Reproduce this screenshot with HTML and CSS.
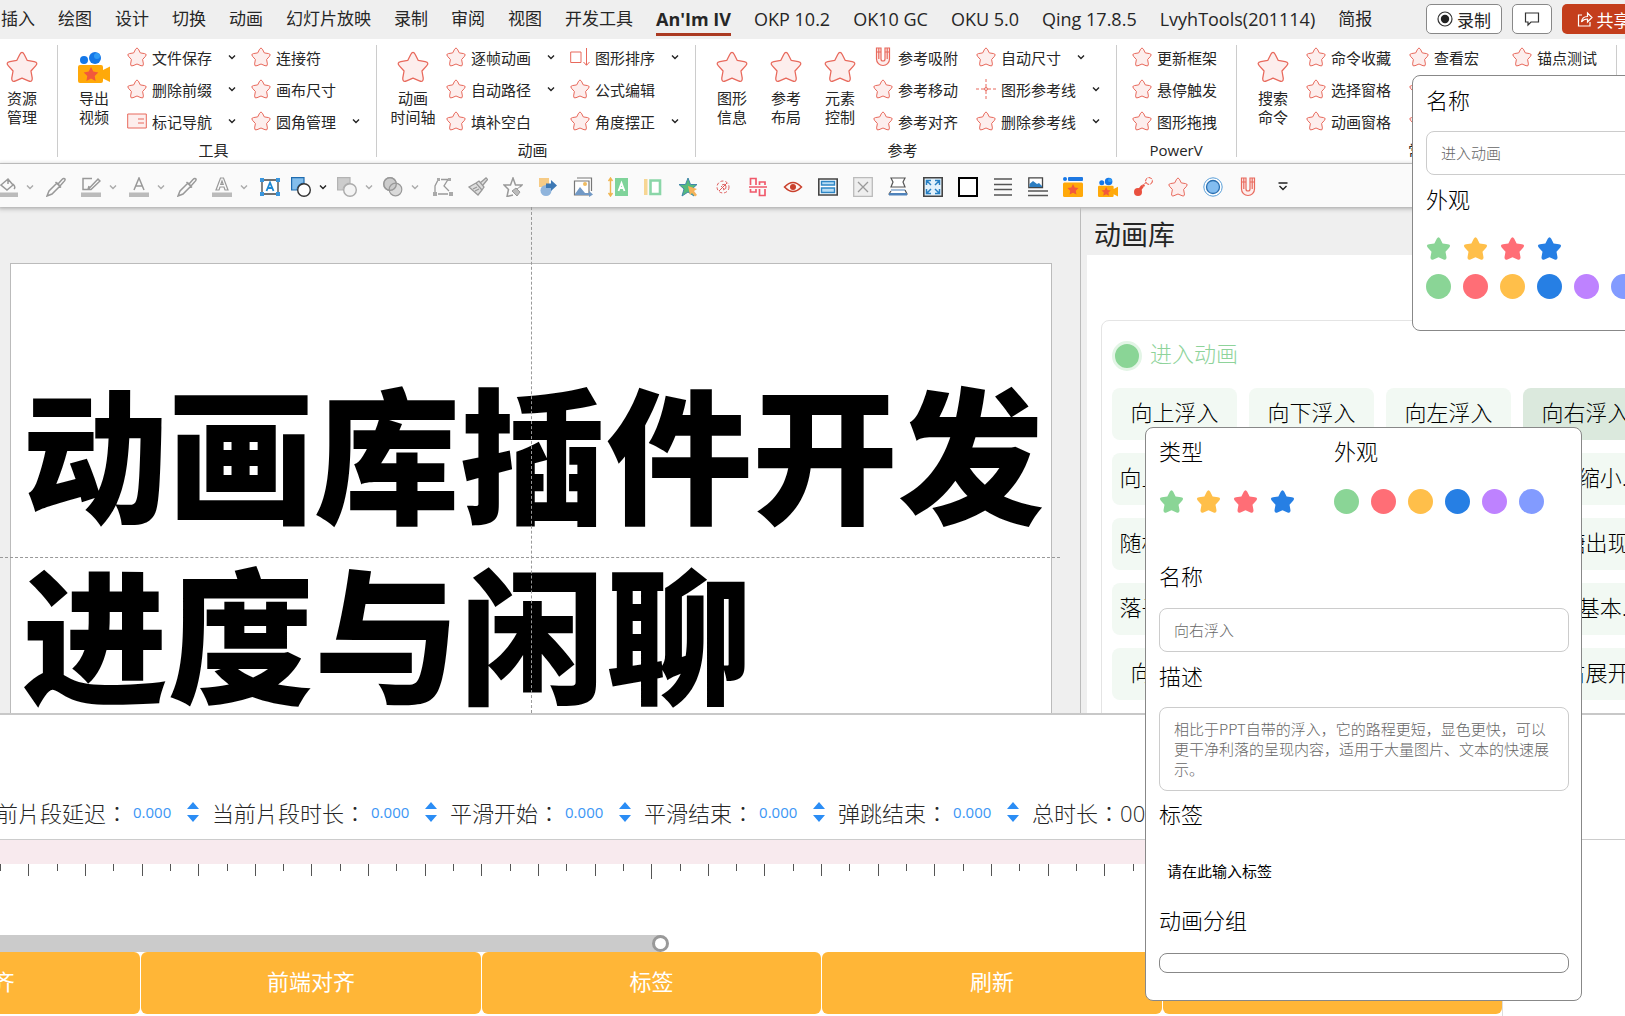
FILE: index.html
```html
<!DOCTYPE html>
<html lang="zh-CN">
<head>
<meta charset="utf-8">
<title>动画库</title>
<link rel="stylesheet" href="styles.css">
</head>
<body>
<svg class="defs" aria-hidden="true">
  <symbol id="star" viewBox="0 0 20 20"><path stroke-linejoin="round" d="M8.6 2.2Q10 -.4 11.400 2.200L13.300 5.900L17.600 6.600Q20.400 7.200 18.500 9.300L15.600 12.500L16.400 16.900Q16.600 19.800 14 18.700L10 17L6 18.700Q3.400 19.800 3.600 16.900L4.400 12.500L1.500 9.300Q-.4 7.200 2.400 6.600L6.700 5.900Z"/></symbol>
  <symbol id="caret" viewBox="0 0 8 8"><path d="M1 2.5L4 5.5L7 2.5" fill="none" stroke="currentColor" stroke-width="1.4"/></symbol>
  <symbol id="camera" viewBox="0 0 32 32"><circle cx="6" cy="9" r="4" fill="#1477e8"/><circle cx="17" cy="7" r="6" fill="#1477e8"/><circle cx="19" cy="5" r="3" fill="#2f9bf5"/><path d="M2 14H23Q25 14 25 16V19L32 15.500V31L25 27.500V30Q25 32 23 32H2Q0 32 0 30V16Q0 14 2 14Z" fill="#ffa90a"/><path d="M13 16l2.300 4.600 5 .8-3.600 3.500.9 5.100-4.600-2.400-4.600 2.400.9-5.100-3.600-3.500 5-.8z" fill="#f2593b"/></symbol>
  <symbol id="magnet" viewBox="0 0 20 20"><path d="M3.500 1H8V12a2 2 0 0 0 4 0V1H16.500V12a6.500 6.500 0 0 1-13 0ZM3.500 5H8M12 5H16.500M5.800 1V12M14.200 1V12" stroke-width="1.2"/></symbol>
  <symbol id="dropper" viewBox="0 0 20 20"><path d="M1 19L3 14L11 6L14 9L6 17ZM9.500 5L15 10.500M12 7L16 2.500Q18 .8 19 2Q19.500 3.500 17.500 5L14 9Z" fill="none" stroke="#999" stroke-width="1.5"/></symbol>
  <symbol id="up" viewBox="0 0 12 20"><path d="M0 7L6 0L12 7ZM0 13L6 20L12 13Z" fill="#2b8df5"/></symbol>
</svg>

<header class="tabs">
  <nav>
    <a href="#">插入</a><a href="#">绘图</a><a href="#">设计</a><a href="#">切换</a><a href="#">动画</a><a href="#">幻灯片放映</a><a href="#">录制</a><a href="#">审阅</a><a href="#">视图</a><a href="#">开发工具</a><a href="#" class="active">An'Im IV</a><a href="#">OKP 10.2</a><a href="#">OK10 GC</a><a href="#">OKU 5.0</a><a href="#">Qing 17.8.5</a><a href="#">LvyhTools(201114)</a><a href="#">简报</a>
  </nav>
  <div class="tab-actions">
    <button class="outlined"><svg width="16" height="16" viewBox="0 0 16 16"><circle cx="8" cy="8" r="7" fill="none" stroke="#333" stroke-width="1.2"/><circle cx="8" cy="8" r="4.200" fill="#222"/></svg>录制</button>
    <button class="outlined comment" aria-label="批注"><svg width="16" height="16" viewBox="0 0 16 16"><path d="M1.500 2H14.500V11H7L4 14V11H1.500Z" fill="none" stroke="#333" stroke-width="1.200"/></svg></button>
    <button class="share"><svg width="16" height="16" viewBox="0 0 16 16"><path d="M5 4H1.500V15H13V11M4.500 11Q5 5.500 10.500 5.500V2L15 6.500L10.500 11V8Q6.500 8 4.500 11Z" fill="none" stroke="#fff" stroke-width="1.200"/></svg>共享</button>
  </div>
</header>

<section class="ribbon">
  <div class="group first"><div class="tools"><button class="big"><svg class="red"><use href="#star"/></svg>资源<br>管理</button></div></div>
  <div class="group">
    <div class="tools">
      <button class="big"><svg><use href="#camera"/></svg>导出<br>视频</button>
      <div class="col">
        <button class="item"><svg class="red"><use href="#star"/></svg>文件保存<svg class="caret"><use href="#caret"/></svg></button>
        <button class="item"><svg class="red"><use href="#star"/></svg>删除前缀<svg class="caret"><use href="#caret"/></svg></button>
        <button class="item"><svg class="red" viewBox="0 0 20 20"><path d="M.7 3H19.300V17H.7ZM11 8H17M11 12H17"/></svg>标记导航<svg class="caret"><use href="#caret"/></svg></button>
      </div>
      <div class="col">
        <button class="item"><svg class="red"><use href="#star"/></svg>连接符</button>
        <button class="item"><svg class="red"><use href="#star"/></svg>画布尺寸</button>
        <button class="item"><svg class="red"><use href="#star"/></svg>圆角管理<svg class="caret"><use href="#caret"/></svg></button>
      </div>
    </div>
    <div class="name">工具</div>
  </div>
  <div class="group">
    <div class="tools">
      <button class="big"><svg class="red"><use href="#star"/></svg>动画<br>时间轴</button>
      <div class="col">
        <button class="item"><svg class="red"><use href="#star"/></svg>逐帧动画<svg class="caret"><use href="#caret"/></svg></button>
        <button class="item"><svg class="red"><use href="#star"/></svg>自动路径<svg class="caret"><use href="#caret"/></svg></button>
        <button class="item"><svg class="red"><use href="#star"/></svg>填补空白</button>
      </div>
      <div class="col">
        <button class="item"><svg class="red" viewBox="0 0 20 20"><path d="M.7 5H11V15.500H.7ZM16.500 1V18M13.500 15L16.500 18.300L19.500 15" fill="none"/></svg>图形排序<svg class="caret"><use href="#caret"/></svg></button>
        <button class="item"><svg class="red"><use href="#star"/></svg>公式编辑</button>
        <button class="item"><svg class="red"><use href="#star"/></svg>角度摆正<svg class="caret"><use href="#caret"/></svg></button>
      </div>
    </div>
    <div class="name">动画</div>
  </div>
  <div class="group">
    <div class="tools">
      <button class="big"><svg class="red"><use href="#star"/></svg>图形<br>信息</button>
      <button class="big"><svg class="red"><use href="#star"/></svg>参考<br>布局</button>
      <button class="big"><svg class="red"><use href="#star"/></svg>元素<br>控制</button>
      <div class="col">
        <button class="item"><svg class="red"><use href="#magnet"/></svg>参考吸附</button>
        <button class="item"><svg class="red"><use href="#star"/></svg>参考移动</button>
        <button class="item"><svg class="red"><use href="#star"/></svg>参考对齐</button>
      </div>
      <div class="col">
        <button class="item"><svg class="red"><use href="#star"/></svg>自动尺寸<svg class="caret"><use href="#caret"/></svg></button>
        <button class="item"><svg class="red" viewBox="0 0 20 20"><path d="M0 10H3M5 10H8M12 10H15M17 10H20M10 0V3M10 5V8M10 12V15M10 17V20"/><circle cx="10" cy="10" r="1.500"/></svg>图形参考线<svg class="caret"><use href="#caret"/></svg></button>
        <button class="item"><svg class="red"><use href="#star"/></svg>删除参考线<svg class="caret"><use href="#caret"/></svg></button>
      </div>
    </div>
    <div class="name">参考</div>
  </div>
  <div class="group slim">
    <div class="tools">
      <div class="col">
        <button class="item"><svg class="red"><use href="#star"/></svg>更新框架</button>
        <button class="item"><svg class="red"><use href="#star"/></svg>悬停触发</button>
        <button class="item"><svg class="red"><use href="#star"/></svg>图形拖拽</button>
      </div>
    </div>
    <div class="name">PowerV</div>
  </div>
  <div class="group">
    <div class="tools">
      <button class="big"><svg class="red"><use href="#star"/></svg>搜索<br>命令</button>
      <div class="col">
        <button class="item"><svg class="red"><use href="#star"/></svg>命令收藏</button>
        <button class="item"><svg class="red"><use href="#star"/></svg>选择窗格</button>
        <button class="item"><svg class="red"><use href="#star"/></svg>动画窗格</button>
      </div>
      <div class="col">
        <button class="item"><svg class="red"><use href="#star"/></svg>查看宏</button>
        <button class="item" aria-label="录制宏"><svg class="red"><use href="#star"/></svg></button>
        <button class="item" aria-label="运行宏"><svg class="red"><use href="#star"/></svg></button>
      </div>
      <div class="col">
        <button class="item"><svg class="red"><use href="#star"/></svg>锚点测试</button>
      </div>
    </div>
    <div class="name">常用</div>
  </div>
</section>

<section class="quick">
  <button class="split" aria-label="填充"><svg viewBox="0 0 20 20"><path d="M3 8L10 2L15 8L9 13ZM10 2V7M15 7Q18 10 16 12" fill="none" stroke="#999" stroke-width="1.500"/><path d="M0 15.500H20V20H0Z" fill="#bbb"/></svg><svg class="caret dim"><use href="#caret"/></svg></button>
  <button aria-label="取色器"><svg><use href="#dropper"/></svg></button>
  <button class="split" aria-label="轮廓"><svg viewBox="0 0 20 20"><path d="M11 1.500H2V12.500H7L17 2L19 4L10 12.500H7L8 9" fill="none" stroke="#999" stroke-width="1.500"/><path d="M0 15.500H20V20H0Z" fill="#bbb"/></svg><svg class="caret dim"><use href="#caret"/></svg></button>
  <button class="split" aria-label="字体颜色"><svg viewBox="0 0 20 20"><path d="M5 13L10 1L15 13M6.500 9H13.500" fill="none" stroke="#999" stroke-width="1.500"/><path d="M0 15.500H20V20H0Z" fill="#bbb"/></svg><svg class="caret dim"><use href="#caret"/></svg></button>
  <button aria-label="文字取色"><svg><use href="#dropper"/></svg></button>
  <button class="split" aria-label="文字轮廓"><svg viewBox="0 0 20 20"><path d="M4 13L8.500 1H11.500L16 13H13L12 10H8L7 13ZM8.800 7.500L10 4L11.200 7.500Z" fill="none" stroke="#999" stroke-width="1.200"/><path d="M0 15.500H20V20H0Z" fill="#bbb"/></svg><svg class="caret dim"><use href="#caret"/></svg></button>
  <div class="shapes">
    <button aria-label="文本框"><svg viewBox="0 0 20 20"><path d="M2 3H18V17H2Z" fill="#fff" stroke="#444" stroke-width="1.300"/><path d="M0 1H4V5H0ZM16 1H20V5H16ZM0 15H4V19H0ZM16 15H20V19H16Z" fill="#3a96dd"/><path d="M6.500 14L10 5.500L13.500 14M8 11H12" fill="none" stroke="#1f88d2" stroke-width="1.800"/></svg></button>
    <button class="split" aria-label="形状"><svg viewBox="0 0 20 20"><path d="M.6.6H13V6A7 7 0 0 0 6 13H.6Z" fill="#83beec" stroke="#1f6cb0" stroke-width="1.200"/><circle cx="13" cy="13" r="6.300" fill="#fff" stroke="#333" stroke-width="1.400"/></svg><svg class="caret"><use href="#caret"/></svg></button>
    <button class="split" aria-label="合并形状"><svg viewBox="0 0 20 20"><path d="M.6.6H13V6A7 7 0 0 0 6 13H.6Z" fill="#ccc" stroke="#b3b3b3" stroke-width="1.200"/><circle cx="13" cy="13" r="6.300" fill="#f3f3f3" stroke="#aaa" stroke-width="1.400"/></svg><svg class="caret dim"><use href="#caret"/></svg></button>
    <button class="split" aria-label="相交"><svg viewBox="0 0 20 20"><circle cx="7" cy="7" r="6.300" fill="#ccc" stroke="#999" stroke-width="1.200"/><circle cx="12.500" cy="12.500" r="6.300" fill="#ccc" fill-opacity=".7" stroke="#999" stroke-width="1.200"/><circle cx="7" cy="7" r="6.300" fill="none" stroke="#999" stroke-width="1.200"/></svg><svg class="caret dim"><use href="#caret"/></svg></button>
  </div>
  <button aria-label="编辑顶点"><svg viewBox="0 0 20 20"><path d="M2 15V9L5 3M8 2.500H15L11 9L16 14M5 17H15" fill="none" stroke="#999" stroke-width="1.300"/><path d="M4 1H7V4H4ZM15 1H18V4H15ZM0 15H4V19H0ZM16 15H20V19H16Z" fill="#aaa"/></svg></button>
  <button aria-label="格式刷"><svg viewBox="0 0 20 20"><path d="M1 10L8 6L14 13L10 18ZM8 6L11 4L16 10L14 13M12 6L18 1L19.500 2.500L15 8M5 12L9 10M7 14L11 12" fill="#ddd" stroke="#999" stroke-width="1.300"/></svg></button>
  <button aria-label="动画刷"><svg viewBox="0 0 20 20"><path d="M10 18L4 19.500L5.500 12.500L1 8H7.500L10 1L12.500 8H19L17 10" fill="none" stroke="#999" stroke-width="1.500"/><path d="M9 14L13 11L17 15L14 19ZM14 12L18 9" fill="#bbb" stroke="#999"/></svg></button>
  <button aria-label="替换形状"><svg viewBox="0 0 20 20"><path d="M1 1H11V10H1Z" fill="#f6cb86"/><circle cx="8" cy="13.500" r="5.500" fill="#8fb4dc"/><path d="M8 6.500H13V3L19 8.500L13 14V11H8Z" fill="#3d78b4"/></svg></button>
  <button aria-label="更改图片"><svg viewBox="0 0 20 20"><path d="M4 1H18.500V14M1.500 4H16V18H1.500Z" fill="#fff" stroke="#777" stroke-width="1.200"/><circle cx="12" cy="7" r="2" fill="#f0bb60"/><path d="M2 17L7 10L12 16H16V14L20 17.500L16 20V18H2Z" fill="#7299c5"/></svg></button>
  <button aria-label="等高文本"><svg viewBox="0 0 20 20"><path d="M2.500 2V18M.5 4L2.500 1L4.500 4M.5 16L2.500 19L4.500 16" fill="none" stroke="#f0b550" stroke-width="1.400"/><path d="M7 1H20V19H7Z" fill="#7fd39a"/><path d="M10.500 14L13.500 6L16.500 14M12 11H15" fill="none" stroke="#fff" stroke-width="1.800"/></svg></button>
  <button aria-label="等宽"><svg viewBox="0 0 20 20"><path d="M1 2H4.500V18H1Z" fill="#f7d694"/><path d="M7.500 3.500H17V17H7.500Z" fill="#fff" stroke="#8ad6a8" stroke-width="2.600"/></svg></button>
  <button aria-label="选择动画"><svg viewBox="0 0 20 20"><path d="M10 1L12.500 7.500H19L14 12L16 19L10 15L4 19L6 12L1 7.500H7.500Z" fill="#55ba7c" stroke="#3f87a8"/><path d="M10 9L19 12L16 14L19 18L17 19.500L14 16L12 18Z" fill="#f5b25a"/></svg></button>
  <button aria-label="路径"><svg viewBox="0 0 20 20"><circle cx="10" cy="10" r="6" fill="none" stroke="#df5b5b" stroke-dasharray="3 2"/><path d="M6 14L14 6M8 9L11 12M9 8Q12 6 13 9T10 13" fill="none" stroke="#df5b5b"/></svg></button>
  <button aria-label="对齐"><svg viewBox="0 0 20 20"><path d="M2.500 8V1.500H8V8M11.500 8V5H17V8M2.500 12V15H8V12M11.500 12V18.500H17V12M1 10H19" fill="none" stroke="#f0596b" stroke-width="1.700"/></svg></button>
  <button aria-label="显示"><svg viewBox="0 0 20 20"><path d="M1.500 10Q10 1 18.500 10Q10 19 1.500 10Z" fill="#fff4f1" stroke="#c9402c" stroke-width="1.500"/><circle cx="10" cy="10" r="3" fill="#c9402c"/></svg></button>
  <button aria-label="窗格"><svg viewBox="0 0 20 20"><path d="M.8 2H19.200V18H.8Z" fill="#fff" stroke="#444" stroke-width="1.600"/><path d="M3.500 4.500H16.500V8H3.500ZM3.500 11H16.500V15.500H3.500Z" fill="#b6dcf5" stroke="#2e86c5" stroke-width="1.400"/></svg></button>
  <button aria-label="关闭"><svg viewBox="0 0 20 20"><path d="M.7.7H19.300V19.300H.7Z" fill="#eee" stroke="#bbb" stroke-width="1.300"/><path d="M5 5L15 15M15 5L5 15" stroke="#999" stroke-width="1.300"/></svg></button>
  <button aria-label="压平"><svg viewBox="0 0 20 20"><path d="M3 1H17L15 5L17 10H3L5 5ZM3 14L1 17H19L17 13" fill="#fff" stroke="#555" stroke-width="1.200"/><path d="M1 16H19V18.500H1ZM3 12.500H17V13.500H3Z" fill="#4e82bb"/></svg></button>
  <button aria-label="适应窗口"><svg viewBox="0 0 20 20"><path d="M.8.800H19.200V19.200H.8Z" fill="#e2f1fb" stroke="#444" stroke-width="1.600"/><path d="M3.500 8V3.500H8M12 3.500H16.500V8M16.500 12V16.500H12M8 16.500H3.500V12M4 4L8 8M16 4L12 8M4 16L8 12M16 16L12 12" fill="none" stroke="#277fc2" stroke-width="1.500"/></svg></button>
  <button aria-label="方框"><svg viewBox="0 0 20 20"><path d="M1 1H19V19H1Z" fill="#fff" stroke="#000" stroke-width="2"/></svg></button>
  <button aria-label="行距"><svg viewBox="0 0 20 20"><path d="M1 2H19M1 7.500H19M1 12.500H19M1 18H19" stroke="#555" stroke-width="1.300"/></svg></button>
  <button aria-label="图文"><svg viewBox="0 0 20 20"><path d="M.8.800H14.500V10.500H.8Z" fill="#fff" stroke="#444" stroke-width="1.300"/><path d="M1.500 7L5 4L9 7L11 6L14 9V10H1.500Z" fill="#2d7ec1"/><path d="M0 14H20M0 18.500H20" stroke="#555" stroke-width="1.300"/></svg></button>
  <button aria-label="动画库"><svg viewBox="0 0 20 20"><circle cx="2" cy="2" r="2" fill="#1477e8"/><rect x="5" width="15" height="4" rx="1" fill="#1e78e2"/><rect y="5.500" width="20" height="14.500" rx="1.500" fill="#ffa90a"/><path d="M10 7l1.700 3.500 3.800.600-2.700 2.700.6 3.800-3.400-1.800-3.400 1.800.6-3.800-2.700-2.700 3.800-.6z" fill="#f2593b"/></svg></button>
  <button aria-label="导出视频"><svg><use href="#camera"/></svg></button>
  <button aria-label="连接"><svg viewBox="0 0 20 20"><circle cx="5" cy="15" r="4" fill="#e9503f"/><path d="M5 15L9.500 9" stroke="#e9503f" stroke-width="3"/><circle cx="10.500" cy="8.500" r="1.300" fill="#e9503f"/><circle cx="16" cy="4" r="3.400" fill="none" stroke="#e9503f" stroke-dasharray="4 1"/><path d="M11.500 7L13.500 5" stroke="#e9503f"/></svg></button>
  <button aria-label="收藏"><svg class="red"><use href="#star"/></svg></button>
  <button aria-label="圆"><svg viewBox="0 0 20 20"><circle cx="10" cy="10" r="9.200" fill="#fff" stroke="#5a9fd8"/><circle cx="10" cy="10" r="6.500" fill="#83bdf0" stroke="#2a6fb0" stroke-width="1.300"/></svg></button>
  <button aria-label="吸附"><svg class="red"><use href="#magnet"/></svg></button>
  <button aria-label="更多"><svg viewBox="0 0 20 20"><path d="M5.500 6H14.500M6.500 9L10 12.500L13.500 9" fill="none" stroke="#222" stroke-width="1.400"/></svg></button>
</section>

<main>
  <section class="stage">
    <article class="slide"><h1>动画库插件开发<br>进度与闲聊</h1></article>
    <i class="guide-v"></i><i class="guide-h"></i>
  </section>
  <aside>
    <h2>动画库</h2>
    <div class="library">
      <div class="card">
        <h3><span class="dot"></span>进入动画</h3>
        <div class="chips">
          <button>向上浮入</button><button>向下浮入</button><button>向左浮入</button><button class="on">向右浮入</button>
          <button>向上轻浮入</button><button></button><button></button><button>向右缩小...</button>
          <button>随机线条入</button><button></button><button></button><button>果糖出现</button>
          <button>落子式出现</button><button></button><button></button><button>缩放基本...</button>
          <button>向上展开</button><button></button><button></button><button>向右展开</button>
        </div>
      </div>
    </div>
  </aside>
</main>

<section class="timeline">
  <div class="fields" lang="zh-TW">
    <div class="field"><label for="f1">当前片段延迟：</label><input id="f1" value="0.000"><button aria-label="调整"><svg><use href="#up"/></svg></button></div>
    <div class="field"><label for="f2">当前片段时长：</label><input id="f2" value="0.000"><button aria-label="调整"><svg><use href="#up"/></svg></button></div>
    <div class="field"><label for="f3">平滑开始：</label><input id="f3" value="0.000"><button aria-label="调整"><svg><use href="#up"/></svg></button></div>
    <div class="field"><label for="f4">平滑结束：</label><input id="f4" value="0.000"><button aria-label="调整"><svg><use href="#up"/></svg></button></div>
    <div class="field"><label for="f5">弹跳结束：</label><input id="f5" value="0.000"><button aria-label="调整"><svg><use href="#up"/></svg></button></div>
    <div class="field">总时长：00</div>
  </div>
  <div class="tracks">
    <div class="lane">
      <div class="band"></div>
      <div class="ticks"><i></i><i></i><i></i><i></i><i></i><i></i><i></i><i></i><i></i><i></i><i></i><i></i><i></i><i></i><i></i><i></i><i></i><i></i><i></i><i></i><i></i><i></i><i></i><i class="major"></i><i></i><i></i><i></i><i></i><i></i><i></i><i></i><i></i><i></i><i></i><i></i><i></i><i></i><i></i><i></i><i></i><i></i><i></i><i></i><i></i><i></i><i></i><i></i><i></i><i></i><i></i><i></i><i></i><i></i><i></i></div>
      <div class="scroll"><span></span></div>
      <div class="actions"><button>后端对齐</button><button>前端对齐</button><button>标签</button><button>刷新</button><button></button></div>
    </div>
  </div>
</section>

<section class="popup group-popup">
  <label for="gname">名称</label>
  <input id="gname" value="进入动画">
  <h4>外观</h4>
  <div class="swatches">
    <svg class="c-green"><use href="#star"/></svg><svg class="c-amber"><use href="#star"/></svg><svg class="c-red"><use href="#star"/></svg><svg class="c-blue"><use href="#star"/></svg>
  </div>
  <div class="swatches">
    <i class="c-green"></i><i class="c-red"></i><i class="c-amber"></i><i class="c-blue"></i><i class="c-purple"></i><i class="c-indigo"></i>
  </div>
</section>

<section class="popup edit-popup">
  <div class="pair">
    <div><h4>类型</h4><div class="swatches"><svg class="c-green"><use href="#star"/></svg><svg class="c-amber"><use href="#star"/></svg><svg class="c-red"><use href="#star"/></svg><svg class="c-blue"><use href="#star"/></svg></div></div>
    <div><h4>外观</h4><div class="swatches"><i class="c-green"></i><i class="c-red"></i><i class="c-amber"></i><i class="c-blue"></i><i class="c-purple"></i><i class="c-indigo"></i></div></div>
  </div>
  <label for="ename">名称</label>
  <input id="ename" value="向右浮入">
  <label for="edesc">描述</label>
  <textarea id="edesc">相比于PPT自带的浮入，它的路程更短，显色更快，可以更干净利落的呈现内容，适用于大量图片、文本的快速展示。</textarea>
  <label for="etag">标签</label>
  <input id="etag" class="tag" value="请在此输入标签">
  <label for="egroup">动画分组</label>
  <input id="egroup" class="thin">
</section>
</body>
</html>
```
FILE: styles.css
```css
* { box-sizing: border-box; }

body {
  margin: 0;
  height: 100vh;
  overflow: hidden;
  position: relative;
  display: flex;
  flex-direction: column;
  background: #fff;
  color: #262626;
  font-family: "Open Sans", "Noto Sans CJK SC", sans-serif;
  font-size: 15px;
}

button, input, textarea { font: inherit; color: inherit; border: 0; margin: 0; padding: 0; background: none; border-radius: 0; }
h1, h2, h3, h4 { margin: 0; font-weight: 300; }
a { color: inherit; text-decoration: none; }
svg { display: block; flex: none; }
.defs { position: absolute; width: 0; height: 0; }

.red { fill: #fdeeed; stroke: #e8695c; stroke-width: 1px; }
.caret { width: 8px; height: 8px; color: #222; }
.caret.dim { color: #aaa; }

/* tab strip */
.tabs { display: flex; height: 39px; flex: none; background: #efefef; font-size: 17px; }
.tabs nav { display: flex; gap: 23px; flex: none; padding-left: 1px; }
.tabs nav a { line-height: 38px; height: 36px; white-space: nowrap; }
.tabs nav a:nth-child(n+11) { font-size: 18px; }
.tabs nav a:last-child { font-size: 17px; }
.tabs nav .active { font-weight: 700; border-bottom: 3px solid #ab3a22; }
.tab-actions { display: flex; gap: 10px; padding-top: 4px; margin-left: auto; margin-right: -20px; }
.tab-actions button { display: flex; align-items: center; justify-content: center; gap: 4px; height: 30px; border-radius: 5px; }
.outlined { width: 76px; background: #fff; border: 1px solid #888; }
.outlined.comment { width: 40px; }
.share { width: 83px; background: #c43e1c; color: #fff; }

/* ribbon */
.ribbon { display: flex; flex: none; height: 125px; padding: 6px 0; border-bottom: 1px solid #c8c8c8; }
.group { display: flex; flex-direction: column; flex: none; padding: 0 16px 0 9px; border-right: 1px solid #ccc; }
.group.first { padding: 0 13px 0 0; }
.group.slim { padding-left: 15px; }
.tools { display: flex; }
.big { width: 54px; padding-top: 6px; line-height: 19px; text-align: center; white-space: nowrap; align-self: flex-start; }
.first .big { width: 44px; }
.big svg { width: 32px; height: 32px; margin: 0 auto 6px; stroke-width: 0.8px; }
.col { display: flex; flex-direction: column; gap: 10px; padding-top: 1px; margin-left: 6px; }
.slim .col { margin-left: 0; }
.col + .col { margin-left: 15px; }
.item { display: flex; align-items: center; gap: 5px; height: 22px; min-width: 88px; white-space: nowrap; }
.item svg { width: 20px; height: 20px; }
.item .caret { width: 8px; height: 8px; margin-left: 11px; }
.name { margin-top: auto; line-height: 14px; text-align: center; }

/* quick access bar */
.quick { display: flex; align-items: center; gap: 15px; flex: none; height: 43px; padding-top: 3px; margin-left: -2px; background: #fafafa; box-shadow: 0 1px 5px #999; position: relative; }
.quick button { width: 20px; height: 20px; flex: none; }
.quick svg { width: 20px; height: 20px; }
.quick .split { display: flex; align-items: center; gap: 8px; width: 33px; }
.quick .caret { width: 8px; height: 8px; }
.shapes { display: flex; gap: 11px; flex: none; }
.shapes .split { width: 35px; }

/* slide and side panel */
main { display: flex; flex: 1; min-height: 0; background: #efefef; }
.stage { position: relative; flex: 1; padding: 56px 28px 0 10px; overflow: hidden; border-right: 1px solid #bbb; }
.slide { height: 100%; padding: 95px 0 0 11px; background: #fff; border: 1px solid #bbb; border-bottom: 0; }
.slide h1 { font: 900 146px/180px "Noto Sans CJK SC", sans-serif; color: #000; white-space: nowrap; }
.guide-v { position: absolute; top: 0; bottom: 0; left: 531px; border-left: 1px dashed #999; }
.guide-h { position: absolute; left: 0; right: 20px; top: 350px; border-top: 1px dashed #999; }
aside { width: 544px; flex: none; padding-left: 6px; display: flex; flex-direction: column; }
aside h2 { font-size: 27px; font-weight: 400; line-height: 48px; padding: 4px 0 0 7px; height: 48px; }
.library { flex: 1; min-height: 0; overflow: hidden; background: #fff; padding: 65px 0 0 14px; }
.card { width: 562px; height: 500px; padding: 16px 10px; border: 1px solid #e4e4e4; border-radius: 8px; }
.card h3 { display: flex; align-items: flex-start; gap: 8px; height: 38px; font-size: 22px; line-height: 32px; color: #8ed39a; }
.dot { width: 30px; height: 30px; margin-top: 4px; border: 3px solid #e3f5e6; border-radius: 50%; background: #8ad596; }
.chips { display: grid; grid-template-columns: repeat(4, 125px); gap: 13px 12px; padding-top: 13px; }
.chips button { height: 52px; padding-bottom: 6px; border-radius: 8px; background: #f2f9f3; color: #000; font-size: 22px; font-weight: 300; white-space: nowrap; }
.chips .on { background: #dbe9dd; }

/* timeline */
.timeline { flex: none; border-top: 2px solid #c8c8c8; background: #fff; position: relative; overflow: hidden; }
.fields { display: flex; gap: 13px; height: 124px; padding-top: 75px; margin-left: -26px; font-size: 22px; font-family: "Open Sans", "Noto Sans CJK TC", sans-serif; font-weight: 300; }
.field { display: flex; align-items: center; height: 44px; white-space: nowrap; flex: none; }
.field input { width: 54px; margin-left: 5px; font-size: 15px; font-weight: 400; color: #3b96f5; }
.field svg { width: 12px; height: 20px; }
.tracks { border-top: 1px solid #ccc; }
.lane { margin-right: 122px; border-right: 1px solid #ddd; background: #fff; overflow: hidden; }
.band { height: 24px; background: #f8eaee; }
.ticks { display: flex; justify-content: space-between; height: 71px; }
.ticks i { width: 1px; height: 7px; background: #555; }
.ticks i:nth-child(even) { height: 12px; }
.ticks .major:nth-child(even) { height: 15px; }
.scroll { width: 44%; height: 17px; background: #cbcbcb; display: flex; justify-content: flex-end; }
.scroll span { width: 17px; height: 17px; margin-right: -8px; border: 3px solid #999; border-radius: 50%; background: #fff; flex: none; }
.actions { display: grid; grid-template-columns: repeat(5, 1fr); gap: 1px; margin-left: -199px; padding-bottom: 2px; }
.actions button { height: 62px; padding-bottom: 6px; border-radius: 6px; background: #ffb637; color: #fff; font-size: 22px; }

/* popups */
.popup { position: absolute; display: flex; flex-direction: column; background: #fff; border: 1px solid #888; border-radius: 8px; color: #000; }
.popup h4, .popup label { font-size: 22px; font-weight: 300; line-height: 30px; padding-bottom: 2px; }
.popup input, .popup textarea { border: 1px solid #ccc; border-radius: 8px; padding: 0 14px 2px; height: 44px; color: #666; resize: none; width: 100%; font-family: "Noto Sans CJK SC", sans-serif; font-weight: 300; }
.popup textarea { display: block; height: 84px; padding: 11px 14px; line-height: 20px; overflow: hidden; }
.swatches { display: flex; gap: 12px; }
.swatches svg, .swatches i { width: 25px; height: 25px; flex: none; }
.swatches i { border-radius: 50%; }
.c-green { fill: #8ad596; background: #8ad596; }
.c-amber { fill: #ffbf4a; background: #ffbf4a; }
.c-red { fill: #ff6e76; background: #ff6e76; }
.c-blue { fill: #267fe4; background: #267fe4; }
.c-purple { background: #be82ff; }
.c-indigo { background: #829bff; }
svg[class^="c-"] { background: none; }

.group-popup { top: 75px; right: -40px; width: 253px; height: 256px; padding: 9px 13px; }
.group-popup input { margin: 14px 0 9px; }
.group-popup .swatches { margin-top: 13px; }
.group-popup h4 { margin-bottom: 7px; }

.edit-popup { right: 43px; bottom: 15px; width: 437px; padding: 8px 12px 27px 13px; }
.pair { display: grid; grid-template-columns: 175px 1fr; height: 125px; }
.pair .swatches { margin-top: 21px; }
.edit-popup input { margin: 15px 0 9px; }
.edit-popup textarea { margin: 14px 0 8px; }
.edit-popup .tag { border: 0; padding: 0 8px 2px; margin: 18px 0 12px; color: #000; font-weight: 400; }
.edit-popup .thin { height: 20px; margin: 16px 0 0; border-color: #888; }
```
